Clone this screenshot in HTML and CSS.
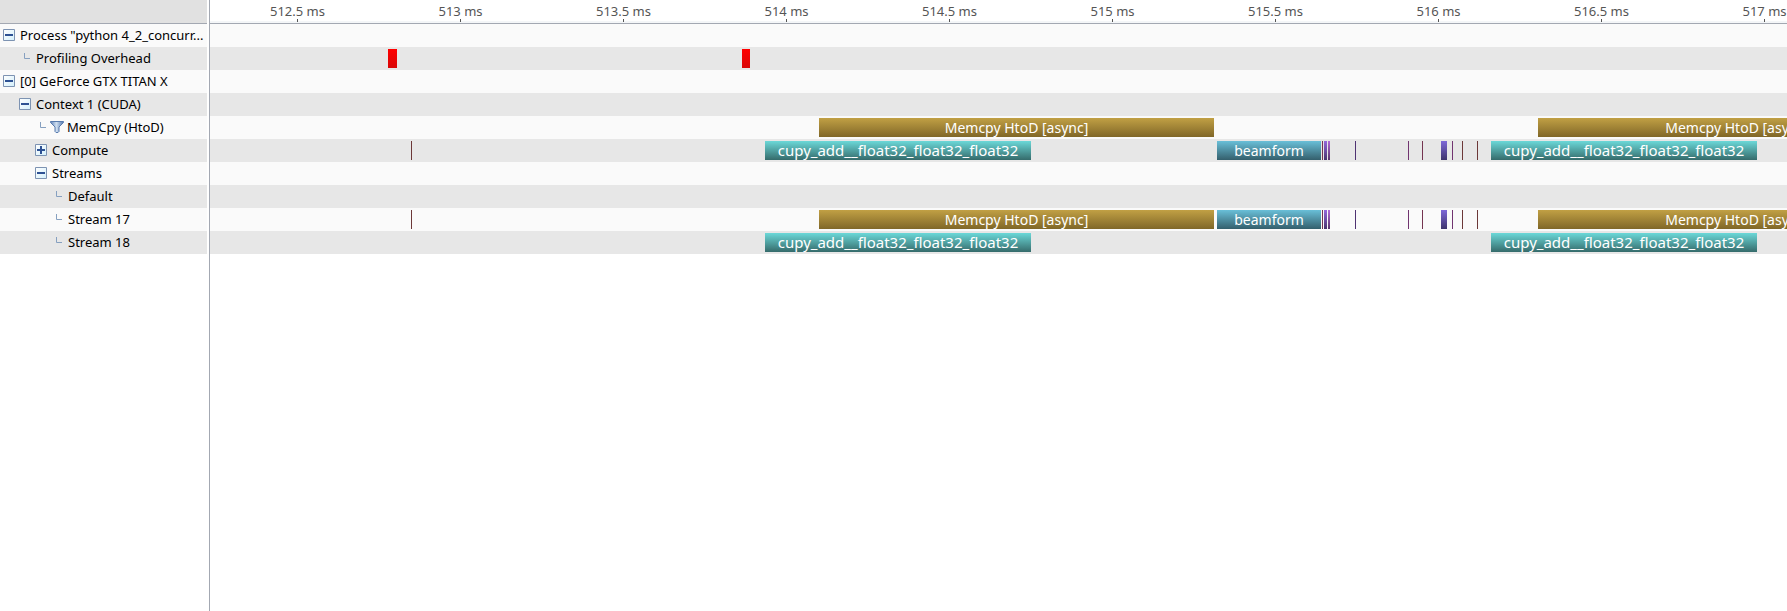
FILE: index.html
```html
<!DOCTYPE html>
<html lang="en">
<head>
<meta charset="utf-8">
<title>Profiler timeline</title>
<link rel="stylesheet" href="styles.css">
</head>
<body>
<svg class="defs" aria-hidden="true">
  <defs>
    <linearGradient id="box-fill" x1="0" y1="0" x2="1" y2="1"><stop offset="0" stop-color="#fff"/><stop offset="1" stop-color="#d3effb"/></linearGradient>
    <linearGradient id="funnel-fill"><stop offset="0" stop-color="#5f82b8"/><stop offset=".45" stop-color="#cfdff0"/><stop offset="1" stop-color="#5075ae"/></linearGradient>
    <symbol id="minus" viewBox="0 0 12 12"><path d="M.5.5h11v11H.5z" fill="url(#box-fill)" stroke="#7d93b2"/><path d="M2 5h8v2H2z" fill="#2d5193"/></symbol>
    <symbol id="plus" viewBox="0 0 12 12"><path d="M.5.5h11v11H.5z" fill="url(#box-fill)" stroke="#7d93b2"/><path d="M2 5h3V2h2v3h3v2H7v3H5V7H2z" fill="#2d5193"/></symbol>
    <symbol id="leaf" viewBox="0 0 12 12"><path d="M5.5 1v5.500H11" fill="none" stroke="#86a0c0"/></symbol>
    <symbol id="funnel" viewBox="0 0 14 12"><path d="M.5.5h13v1L9 6v4.500l-1 1H6l-1-1V6L.5 1.500z" fill="url(#funnel-fill)" stroke="#587bae"/></symbol>
  </defs>
</svg>
<main class="profiler">
  <nav class="sidebar" aria-label="Timeline rows">
    <div class="corner"></div>
    <ul class="rows">
      <li class="row"><button class="toggle" aria-label="Collapse process"><svg class="icon"><use href="#minus"/></svg></button><span class="name">Process "python 4_2_concurr...</span></li>
      <li class="row level-1"><svg class="icon"><use href="#leaf"/></svg><span class="name">Profiling Overhead</span></li>
      <li class="row"><button class="toggle" aria-label="Collapse device"><svg class="icon"><use href="#minus"/></svg></button><span class="name">[0] GeForce GTX TITAN X</span></li>
      <li class="row level-1"><button class="toggle" aria-label="Collapse context"><svg class="icon"><use href="#minus"/></svg></button><span class="name">Context 1 (CUDA)</span></li>
      <li class="row level-2 filtered"><svg class="icon"><use href="#leaf"/></svg><svg class="funnel"><use href="#funnel"/></svg><span class="name">MemCpy (HtoD)</span></li>
      <li class="row level-2"><button class="toggle" aria-label="Expand compute"><svg class="icon"><use href="#plus"/></svg></button><span class="name">Compute</span></li>
      <li class="row level-2"><button class="toggle" aria-label="Collapse streams"><svg class="icon"><use href="#minus"/></svg></button><span class="name">Streams</span></li>
      <li class="row level-3"><svg class="icon"><use href="#leaf"/></svg><span class="name">Default</span></li>
      <li class="row level-3"><svg class="icon"><use href="#leaf"/></svg><span class="name">Stream 17</span></li>
      <li class="row level-3"><svg class="icon"><use href="#leaf"/></svg><span class="name">Stream 18</span></li>
    </ul>
  </nav>
  <section class="timeline" aria-label="Timeline">
    <div class="ruler">
      <span class="tick">512.5 ms</span><span class="tick">513 ms</span><span class="tick">513.5 ms</span><span class="tick">514 ms</span><span class="tick">514.5 ms</span><span class="tick">515 ms</span><span class="tick">515.5 ms</span><span class="tick">516 ms</span><span class="tick">516.5 ms</span><span class="tick">517 ms</span>
    </div>
    <div class="rows">
      <div class="row track"></div>
      <div class="row track">
        <span class="event overhead" style="margin-left:178px;width:9px"></span>
        <span class="event overhead" style="margin-left:345px;width:8px"></span>
      </div>
      <div class="row track"></div>
      <div class="row track"></div>
      <div class="row track">
        <span class="event memcpy" style="margin-left:609px;width:395px">Memcpy HtoD [async]</span>
        <span class="event memcpy" style="margin-left:324px;width:398px">Memcpy HtoD [async]</span>
      </div>
      <div class="row track">
        <span class="event maroon" style="margin-left:201px;width:1px"></span>
        <span class="event add" style="margin-left:353px;width:266px">cupy_add__float32_float32_float32</span>
        <span class="event beamform" style="margin-left:186px;width:104px">beamform</span>
        <span class="event wine" style="margin-left:1px;width:1px"></span>
        <span class="event violet" style="margin-left:1px;width:3px"></span>
        <span class="event orchid" style="margin-left:1px;width:2px"></span>
        <span class="event indigo" style="margin-left:25px;width:1px"></span>
        <span class="event plum" style="margin-left:52px;width:1px"></span>
        <span class="event wine" style="margin-left:13px;width:1px"></span>
        <span class="event blue" style="margin-left:18px;width:6px"></span>
        <span class="event plum" style="margin-left:5px;width:1px"></span>
        <span class="event maroon" style="margin-left:9px;width:1px"></span>
        <span class="event maroon" style="margin-left:14px;width:1px"></span>
        <span class="event add" style="margin-left:13px;width:266px">cupy_add__float32_float32_float32</span>
      </div>
      <div class="row track"></div>
      <div class="row track"></div>
      <div class="row track">
        <span class="event maroon" style="margin-left:201px;width:1px"></span>
        <span class="event memcpy" style="margin-left:407px;width:395px">Memcpy HtoD [async]</span>
        <span class="event beamform" style="margin-left:3px;width:104px">beamform</span>
        <span class="event wine" style="margin-left:1px;width:1px"></span>
        <span class="event violet" style="margin-left:1px;width:3px"></span>
        <span class="event orchid" style="margin-left:1px;width:2px"></span>
        <span class="event indigo" style="margin-left:25px;width:1px"></span>
        <span class="event plum" style="margin-left:52px;width:1px"></span>
        <span class="event wine" style="margin-left:13px;width:1px"></span>
        <span class="event blue" style="margin-left:18px;width:6px"></span>
        <span class="event plum" style="margin-left:5px;width:1px"></span>
        <span class="event maroon" style="margin-left:9px;width:1px"></span>
        <span class="event maroon" style="margin-left:14px;width:1px"></span>
        <span class="event memcpy" style="margin-left:60px;width:398px">Memcpy HtoD [async]</span>
      </div>
      <div class="row track">
        <span class="event add" style="margin-left:555px;width:266px">cupy_add__float32_float32_float32</span>
        <span class="event add" style="margin-left:460px;width:266px">cupy_add__float32_float32_float32</span>
      </div>
    </div>
  </section>
</main>
</body>
</html>
```

FILE: styles.css
```css
* { box-sizing: border-box; }

body {
  margin: 0;
  background: #fff;
  color: #000;
  font-family: "Noto Sans", "Open Sans", sans-serif;
  font-size: 13px;
}

.defs { position: absolute; width: 0; height: 0; }

.profiler { display: flex; min-height: 100vh; }

.sidebar {
  flex: none;
  width: 210px;
  border-right: 1px solid #a3a8b2;
}

.corner {
  height: 24px;
  margin-right: 2px;
  background: #e1e1e1;
  border-bottom: 1px solid #a3a8b2;
}

.rows { margin: 0; padding: 0; list-style: none; }

.row {
  display: flex;
  align-items: center;
  height: 23px;
  background: #fafafa;
}
.row:nth-child(even) { background: #e7e7e7; }

.sidebar .row { margin-right: 2px; padding: 0 0 1px 3px; gap: 5px; }
.sidebar .level-1 { padding-left: 19px; }
.sidebar .level-2 { padding-left: 35px; }
.sidebar .level-3 { padding-left: 51px; }
.sidebar .filtered { gap: 3px; }

.toggle { display: block; margin: 0; padding: 0; border: 0; background: none; }
.icon { display: block; flex: none; width: 12px; height: 12px; }
.funnel { display: block; flex: none; width: 14px; height: 12px; }
.name { white-space: nowrap; line-height: 20px; }

.timeline { flex: 1; min-width: 0; overflow: hidden; }

.ruler {
  display: flex;
  height: 24px;
  padding-left: 6px;
  border-bottom: 1px solid #a3a8b2;
  background: linear-gradient(#fff 21px, #f4f6f8 21px);
  color: #555;
}

.tick {
  display: flex;
  flex: none;
  flex-direction: column;
  align-items: center;
  width: 163px;
  padding-top: 3px;
  line-height: 16px;
}
.tick::after { content: ""; width: 1px; height: 3px; background: #555; }

.event {
  flex: none;
  height: 19px;
  overflow: hidden;
  color: #fff;
  font-size: 14px;
  line-height: 19px;
  text-align: center;
  white-space: nowrap;
}

.overhead { background: linear-gradient(#ff0000, #d90707); }
.memcpy { background: linear-gradient(#c1a044, #806728); }
.add { background: linear-gradient(#6bd8d8, #356b6b); font-size: 15px; }
.beamform { background: linear-gradient(#69bfd8, #345f6c); }
.violet { background: linear-gradient(#9468dc, #49346c); }
.orchid { background: linear-gradient(#b168d8, #58346c); }
.blue { background: linear-gradient(#7d68d8, #3e346c); }
.indigo { background: #4f3272; }
.plum { background: #713470; }
.wine { background: #743450; }
.maroon { background: #6c3838; }
```
